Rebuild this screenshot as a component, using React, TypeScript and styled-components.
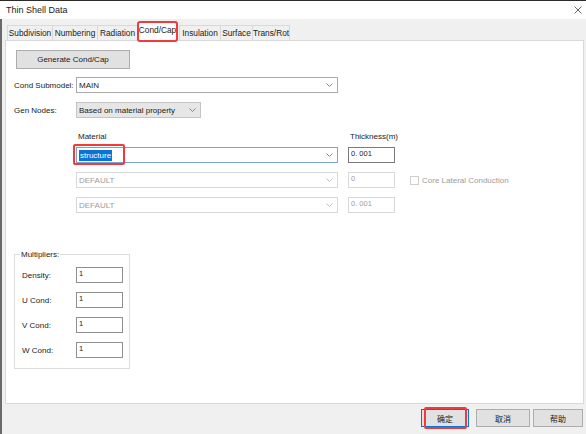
import * as React from "react";
import styled, { createGlobalStyle, css } from "styled-components";

const Global = createGlobalStyle`
  html, body { margin: 0; padding: 0; background: #f0f0f0; }
  body {
    font-family: "Liberation Sans", "Noto Sans CJK SC", Arial, sans-serif;
    font-size: 8px;
    color: #1a1a1a;
  }
`;

const Window = styled.div`
  width: 586px;
  height: 434px;
  display: flex;
  flex-direction: column;
  background: #f0f0f0;
  border-top: 1px solid #2b2b2b;
  box-sizing: border-box;
  overflow: hidden;
`;

const TitleBar = styled.div`
  height: 18px;
  flex: none;
  display: flex;
  align-items: center;
  justify-content: space-between;
  padding: 0 4px 0 6px;
  background: #ffffff;
  font-size: 9px;
`;

const Body = styled.div`
  flex: 1;
  display: flex;
  flex-direction: column;
  border-left: 2px solid #6a6a6a;
  padding: 5px 0 0 3px;
`;

const TabRow = styled.div`
  display: flex;
  align-items: flex-end;
  height: 16px;
  padding-left: 2px;
  position: relative;
  z-index: 1;
`;

const Tab = styled.div<{ $active?: boolean; $w: number }>`
  width: ${(p) => p.$w}px;
  height: 15px;
  box-sizing: border-box;
  border: 1px solid #d9d9d9;
  border-bottom: none;
  margin-right: -1px;
  background: #f0f0f0;
  display: flex;
  align-items: center;
  justify-content: center;
  white-space: nowrap;
  font-size: 8.3px;
  ${(p) =>
    p.$active &&
    css`
      height: 19px;
      background: #ffffff;
      margin: 0 2px 0 1px;
      margin-bottom: -1px;
      outline: 2px solid #ef3b3b;
      outline-offset: -1px;
      border-radius: 2px;
      align-items: flex-start;
      padding-top: 2px;
    `}
`;

const Panel = styled.div`
  width: 579px;
  height: 364px;
  box-sizing: border-box;
  background: #ffffff;
  border: 1px solid #d9d9d9;
  padding: 9px 0 0 8px;
  display: flex;
  flex-direction: column;
`;

const GenButton = styled.div`
  width: 114px;
  height: 19px;
  margin-left: 2px;
  box-sizing: border-box;
  border: 1px solid #adadad;
  background: #e1e1e1;
  display: flex;
  align-items: center;
  justify-content: center;
`;

const FormRow = styled.div<{ $mt: number }>`
  display: flex;
  align-items: center;
  margin-top: ${(p) => p.$mt}px;
`;

const Label = styled.div<{ $w?: number }>`
  width: ${(p) => p.$w ?? 62}px;
  flex: none;
  white-space: nowrap;
`;

const Combo = styled.div<{ $w: number; $disabled?: boolean; $focus?: boolean; $gray?: boolean }>`
  width: ${(p) => p.$w}px;
  height: 16px;
  box-sizing: border-box;
  border: 1px solid ${(p) => (p.$focus ? "#7da2ce" : p.$disabled ? "#d8d8d8" : p.$gray ? "#c4c4c4" : "#a9a9a9")};
  background: ${(p) => (p.$gray ? "#e6e6e6" : "#ffffff")};
  color: ${(p) => (p.$disabled ? "#9c9c9c" : "#1a1a1a")};
  display: flex;
  align-items: center;
  justify-content: space-between;
  padding: 0 4px 0 2px;
  position: relative;
`;

const Selected = styled.span`
  background: #0a74d6;
  color: #ffffff;
  padding: 1px 1px;
`;

const RedMark = styled.div`
  position: absolute;
  left: -4px;
  top: -4px;
  width: 48px;
  height: 17px;
  border: 2px solid #ef3b3b;
  border-radius: 2px;
`;

const TextBox = styled.div<{ $disabled?: boolean; $dark?: boolean; $w?: number }>`
  width: ${(p) => p.$w ?? 47}px;
  height: 16px;
  box-sizing: border-box;
  border: 1px solid ${(p) => (p.$dark ? "#7a7a7a" : p.$disabled ? "#d8d8d8" : "#8f8f8f")};
  background: #ffffff;
  color: ${(p) => (p.$disabled ? "#9c9c9c" : "#1a1a1a")};
  padding: 1px 2px;
  font-size: 7.5px;
  line-height: 9px;
  flex: none;
`;

const MatHeader = styled.div`
  margin: 13px 0 0 63px;
  display: flex;
  height: 10px;
  align-items: center;
`;

const HeadLabel = styled.div<{ $w: number }>`
  width: ${(p) => p.$w}px;
  padding-left: 1px;
`;

const MatGrid = styled.div`
  margin-left: 62px;
  margin-top: 6px;
  display: grid;
  grid-template-columns: 262px 10px 47px 15px auto;
  grid-auto-rows: 16px;
  row-gap: 9px;
  align-items: center;
`;

const Check = styled.div`
  display: flex;
  align-items: center;
  gap: 3px;
  color: #9c9c9c;
  white-space: nowrap;
`;

const CheckBox = styled.span`
  width: 7px;
  height: 7px;
  border: 1px solid #cfcfcf;
  background: #fff;
`;

const Group = styled.fieldset`
  margin: 37px 0 0 0;
  width: 116px;
  height: 119px;
  box-sizing: border-box;
  border: 1px solid #dcdcdc;
  padding: 8px 5px 0 7px;
  display: flex;
  flex-direction: column;
  gap: 9px;
  legend {
    padding: 0 1px;
    margin-left: -2px;
  }
`;

const GroupRow = styled.div`
  display: flex;
  align-items: center;
`;

const Footer = styled.div`
  height: 30px;
  display: flex;
  justify-content: flex-end;
  align-items: flex-start;
  padding: 5px 3px 0 0;
`;

const DlgButton = styled.div<{ $w: number; $default?: boolean; $ml?: number }>`
  width: ${(p) => p.$w}px;
  height: 18px;
  margin-left: ${(p) => p.$ml ?? 0}px;
  box-sizing: border-box;
  border: 1px solid ${(p) => (p.$default ? "#0078d7" : "#adadad")};
  background: #e1e1e1;
  display: flex;
  align-items: center;
  justify-content: center;
  position: relative;
  font-size: 8px;
`;

const ButtonMark = styled.div`
  position: absolute;
  left: 2px;
  top: -3px;
  right: 1px;
  bottom: -3px;
  border: 2px solid #ef3b3b;
  border-radius: 2px;
`;

const Chevron = ({ color = "#7a7a7a" }: { color?: string }) => (
  <svg width="7" height="4" viewBox="0 0 7 4">
    <polyline points="0.5,0.5 3.5,3.5 6.5,0.5" fill="none" stroke={color} strokeWidth="0.9" />
  </svg>
);

const tabs: [string, number][] = [
  ["Subdivision", 46],
  ["Numbering", 46],
  ["Radiation", 41],
  ["Cond/Cap", 39],
  ["Insulation", 42],
  ["Surface", 33],
  ["Trans/Rot", 38],
];

const multipliers = ["Density:", "U Cond:", "V Cond:", "W Cond:"];

export default function App() {
  return (
    <>
      <Global />
      <Window>
        <TitleBar>
          <span>Thin Shell Data</span>
          <svg width="8" height="8" viewBox="0 0 8 8">
            <path d="M0.5 0.5 L7.5 7.5 M7.5 0.5 L0.5 7.5" stroke="#555" strokeWidth="0.9" />
          </svg>
        </TitleBar>
        <Body>
          <TabRow>
            {tabs.map(([t, w]) => (
              <Tab key={t} $w={w} $active={t === "Cond/Cap"}>
                {t}
              </Tab>
            ))}
          </TabRow>
          <Panel>
            <GenButton>Generate Cond/Cap</GenButton>
            <FormRow $mt={8}>
              <Label>Cond Submodel:</Label>
              <Combo $w={262}>
                <span>MAIN</span>
                <Chevron />
              </Combo>
            </FormRow>
            <FormRow $mt={9}>
              <Label>Gen Nodes:</Label>
              <Combo $w={125} $gray>
                <span>Based on material property</span>
                <Chevron />
              </Combo>
            </FormRow>
            <MatHeader>
              <HeadLabel $w={271}>Material</HeadLabel>
              <HeadLabel $w={80}>Thickness(m)</HeadLabel>
            </MatHeader>
            <MatGrid>
              <Combo $w={262} $focus>
                <Selected>structure</Selected>
                <Chevron />
                <RedMark />
              </Combo>
              <div />
              <TextBox $dark>0. 001</TextBox>
              <div />
              <div />

              <Combo $w={262} $disabled>
                <span>DEFAULT</span>
                <Chevron color="#b8b8b8" />
              </Combo>
              <div />
              <TextBox $disabled>0</TextBox>
              <div />
              <Check>
                <CheckBox />
                Core Lateral Conduction
              </Check>

              <Combo $w={262} $disabled>
                <span>DEFAULT</span>
                <Chevron color="#b8b8b8" />
              </Combo>
              <div />
              <TextBox $disabled>0. 001</TextBox>
              <div />
              <div />
            </MatGrid>
            <Group>
              <legend>Multipliers:</legend>
              {multipliers.map((m) => (
                <GroupRow key={m}>
                  <Label $w={54}>{m}</Label>
                  <TextBox>1</TextBox>
                </GroupRow>
              ))}
            </Group>
          </Panel>
          <Footer>
            <DlgButton $w={48} $default>
              确定
              <ButtonMark />
            </DlgButton>
            <DlgButton $w={54} $ml={7}>取消</DlgButton>
            <DlgButton $w={50} $ml={3}>帮助</DlgButton>
          </Footer>
        </Body>
      </Window>
    </>
  );
}
